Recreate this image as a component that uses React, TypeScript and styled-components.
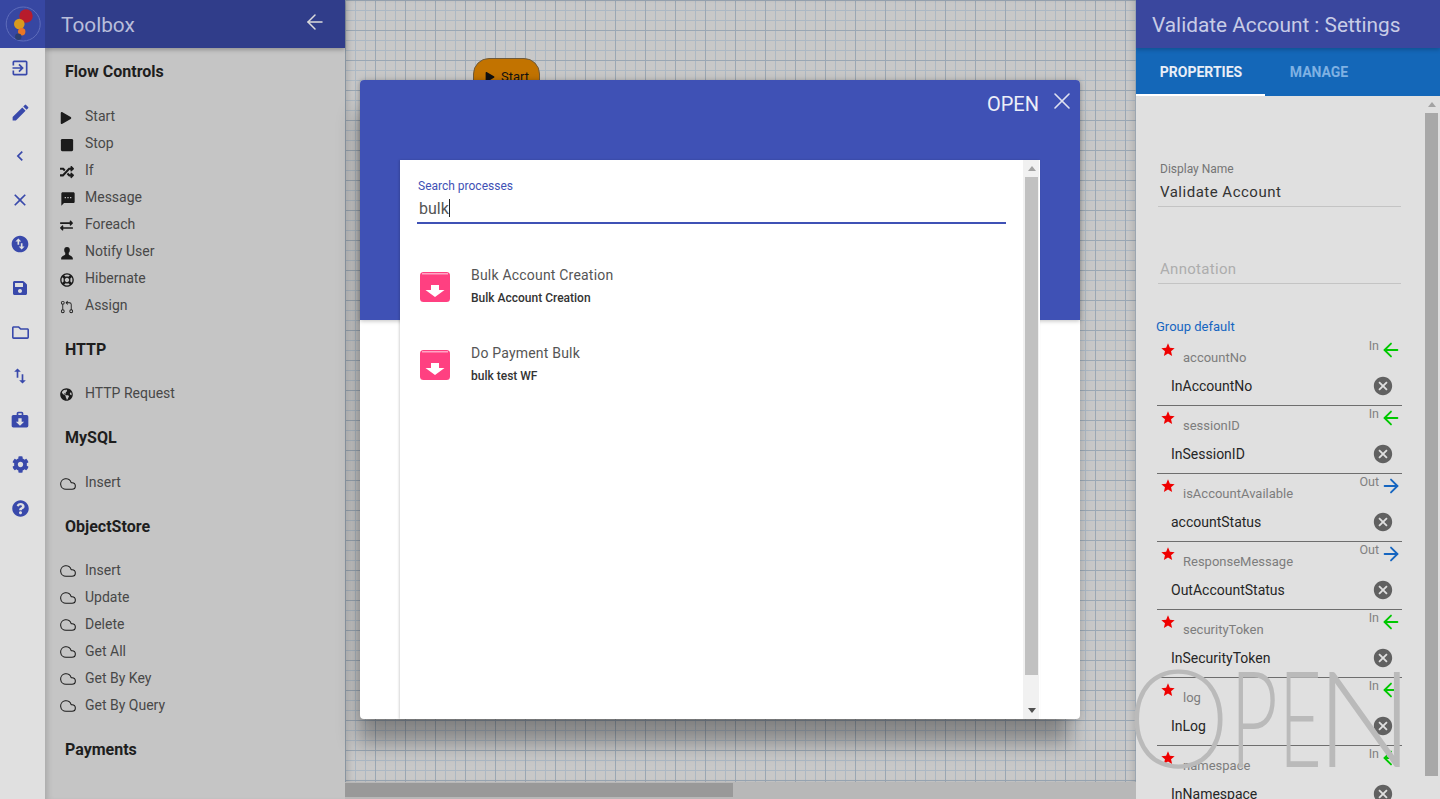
import React from "react";
import styled, { createGlobalStyle } from "styled-components";
import { FiArrowLeft, FiArrowRight, FiCloud, FiX } from "react-icons/fi";
import {
  MdExitToApp, MdEdit, MdChevronLeft, MdClose, MdSwapVerticalCircle, MdSwapVert, MdCancel, MdStar, MdTextsms,
} from "react-icons/md";
import { FaSave, FaRegFolder, FaCog, FaQuestionCircle, FaPlay, FaStop, FaRandom, FaRegLifeRing, FaGlobeAmericas, FaExchangeAlt } from "react-icons/fa";
import { GoGitPullRequest } from "react-icons/go";

const Global = createGlobalStyle`
  html, body { margin: 0; height: 100%; overflow: hidden; }
  body { font-family: Roboto, "Liberation Sans", sans-serif; background: #c8c8c8; }
  #root { height: 100%; }
  * { box-sizing: border-box; }
`;

const Page = styled.div`
  display: flex;
  height: 799px;
  width: 1440px;
  overflow: hidden;
  position: relative;
`;

/* ---------- Icon rail ---------- */
const Rail = styled.nav`
  width: 45px;
  flex: none;
  background: #e0e0e0;
  display: flex;
  flex-direction: column;
  z-index: 2;
`;
const LogoBox = styled.div`
  height: 48px;
  margin-bottom: -2px;
  background: #3747a2;
  display: flex;
  align-items: center;
  justify-content: center;
`;
const RailButton = styled.div`
  height: 44px;
  display: flex;
  align-items: center;
  justify-content: center;
  color: #3949ab;
  padding-right: 5px;
`;

/* ---------- Toolbox ---------- */
const Toolbox = styled.aside`
  width: 300px;
  flex: none;
  background: #c5c5c5;
  display: flex;
  flex-direction: column;
  box-shadow: inset 6px 0 6px -4px rgba(0, 0, 0, 0.16);
  z-index: 1;
`;
const ToolboxHeader = styled.header`
  height: 48px;
  flex: none;
  background: #303d8a;
  color: #b9bedb;
  display: flex;
  align-items: center;
  justify-content: space-between;
  padding: 2px 18px 0 16px;
  font-size: 20.8px;
  box-shadow: 0 2px 4px rgba(0, 0, 0, 0.25);
`;
const BackArrow = styled.span`
  display: flex;
  color: #dcdcdc;
  margin-top: -6px;
`;
const ToolboxBody = styled.div`
  padding: 11.5px 0 0 15px;
  overflow: hidden;
  flex: 1;
`;
const Section = styled.section<{ $after: number }>`
  margin-bottom: ${(p) => p.$after}px;
`;
const Heading = styled.h3<{ $below: number }>`
  margin: 0 0 ${(p) => p.$below}px 5px;
  height: 24px;
  line-height: 24px;
  font-size: 16px;
  font-weight: 700;
  color: #1e1e1e;
`;
const Tool = styled.div`
  height: 27px;
  display: flex;
  align-items: center;
  font-size: 14px;
  color: #484848;
`;
const ToolIcon = styled.span`
  width: 25px;
  flex: none;
  display: flex;
  align-items: center;
  color: #1b1b1b;
  margin-top: 3px;
`;

/* ---------- Canvas ---------- */
const Canvas = styled.main`
  flex: 1;
  display: flex;
  flex-direction: column;
  min-width: 0;
  position: relative;
`;
const Grid = styled.div`
  flex: 1;
  background-color: #c8c8c8;
  background-image:
    linear-gradient(to right, #9aa7b4 1px, transparent 1px),
    linear-gradient(to bottom, #9aa7b4 1px, transparent 1px),
    linear-gradient(to right, #acb8c4 1px, transparent 1px),
    linear-gradient(to bottom, #acb8c4 1px, transparent 1px);
  background-size: 30px 30px, 30px 30px, 10px 10px, 10px 10px;
  padding: 58px 0 0 128px;
  box-shadow: inset 6px 0 6px -3px rgba(0, 0, 0, 0.14), inset -6px 0 6px -3px rgba(0, 0, 0, 0.12);
`;
const StartNode = styled.div`
  width: 67px;
  height: 44px;
  border-radius: 16px;
  background: #c27300;
  border: 1px solid #6f5a3a;
  display: flex;
  align-items: flex-start;
  gap: 6px;
  padding: 10px 0 0 11px;
  font-size: 13px;
  color: #111;
`;
const HScroll = styled.div`
  height: 17px;
  flex: none;
  background: #b8b8b8;
  padding-top: 1px;
`;
const HThumb = styled.div`
  width: 388px;
  height: 14px;
  background: #999;
`;

/* ---------- Modal ---------- */
const Overlay = styled.div`
  position: absolute;
  inset: 0;
  display: flex;
  justify-content: center;
  padding-top: 80px;
  z-index: 3;
  pointer-events: none;
`;
const Modal = styled.div`
  position: relative;
  width: 720px;
  height: 639px;
  background: #fff;
  border-radius: 4px;
  box-shadow: -6px 28px 20px -4px rgba(0, 0, 0, 0.33), 0 0 8px rgba(0, 0, 0, 0.12);
`;
const ModalBand = styled.div`
  height: 240px;
  background: #3f51b5;
  border-radius: 4px 4px 0 0;
  box-shadow: 0 1px 4px rgba(0, 0, 0, 0.25);
  display: flex;
  justify-content: flex-end;
  align-items: flex-start;
  color: #eceef8;
`;
const ModalTitle = styled.div`
  font-size: 20px;
  margin: 12px 0 0 0;
  line-height: 24px;
`;
const ModalClose = styled.span`
  display: flex;
  color: #dfe1f0;
  margin: 7px 4px 0 9px;
`;
const Sheet = styled.div`
  position: absolute;
  left: 40px;
  right: 40px;
  top: 80px;
  bottom: 0;
  background: #fff;
  box-shadow: -1px 0 2px rgba(0, 0, 0, 0.16);
  display: flex;
`;
const SheetContent = styled.div`
  flex: 1;
  padding: 19px 17px 0 17px;
  min-width: 0;
`;
const SearchLabel = styled.label`
  display: block;
  font-size: 12px;
  line-height: 14px;
  color: #3f51b5;
  padding-left: 1px;
`;
const SearchValue = styled.div`
  height: 31px;
  padding: 6px 0 0 2px;
  font-size: 16px;
  line-height: 20px;
  color: #555;
  border-bottom: 2px solid #3f51b5;
  display: flex;
  align-items: flex-start;
`;
const Caret = styled.span`
  display: inline-block;
  width: 1px;
  height: 18px;
  background: #222;
`;
const ResultList = styled.div`
  margin-top: 39px;
  padding-left: 3px;
`;
const Result = styled.div`
  height: 78px;
  display: flex;
  gap: 21px;
`;
const ResultIcon = styled.span`
  width: 30px;
  height: 30px;
  margin-top: 9px;
  flex: none;
  display: flex;
`;
const ResultText = styled.div`
  display: flex;
  flex-direction: column;
`;
const ResultTitle = styled.div`
  font-size: 14px;
  line-height: 24px;
  color: #555;
  letter-spacing: 0.2px;
`;
const ResultSub = styled.div`
  font-size: 12px;
  line-height: 22px;
  font-weight: 500;
  color: #333;
`;
const VScroll = styled.div<{ $track: string }>`
  width: 16px;
  flex: none;
  margin-right: 1px;
  background: ${(p) => p.$track};
  display: flex;
  flex-direction: column;
  align-items: center;
  padding: 0 1px 0 2px;
`;
const ArrowCap = styled.div<{ $down?: boolean }>`
  height: 17px;
  flex: none;
  width: 100%;
  display: flex;
  align-items: center;
  justify-content: center;
  &::before {
    content: "";
    border-left: 4px solid transparent;
    border-right: 4px solid transparent;
    ${(p) => (p.$down ? "border-top: 5px solid #505050;" : "border-bottom: 5px solid #a3a3a3;")}
  }
`;
const VThumb = styled.div<{ $h: number; $color: string }>`
  width: 100%;
  height: ${(p) => p.$h}px;
  background: ${(p) => p.$color};
`;
const VSpacer = styled.div`
  flex: 1;
`;

/* ---------- Right panel ---------- */
const Settings = styled.aside`
  width: 304px;
  flex: none;
  background: #e0e0e0;
  display: flex;
  flex-direction: column;
  height: 799px;
  overflow: hidden;
`;
const SettingsHeader = styled.header`
  height: 48px;
  flex: none;
  background: #3a479e;
  color: #c8cce6;
  font-size: 20.8px;
  line-height: 50px;
  padding-left: 16px;
  box-shadow: 0 2px 4px rgba(0, 0, 0, 0.2);
  z-index: 1;
`;
const Tabs = styled.div`
  height: 48px;
  flex: none;
  background: #1467b8;
  display: flex;
`;
const TabItem = styled.div<{ $active?: boolean }>`
  width: ${(p) => (p.$active ? 129 : 108)}px;
  padding-left: ${(p) => (p.$active ? 1 : 0)}px;
  text-align: center;
  font-size: 14px;
  font-weight: 700;
  line-height: 48px;
  color: ${(p) => (p.$active ? "#e8eef7" : "#7fb1e3")};
  border-bottom: 2px solid ${(p) => (p.$active ? "#fff" : "transparent")};
`;
const SettingsBody = styled.div`
  flex: 1;
  display: flex;
  min-height: 0;
  overflow: hidden;
`;
const Form = styled.div`
  width: 287px;
  flex: none;
  padding: 0 0 0 20px;
`;
const SmallLabel = styled.div`
  margin-top: 66px;
  padding-left: 4px;
  font-size: 12px;
  line-height: 14px;
  color: #757575;
`;
const Field = styled.div<{ $muted?: boolean; $gap: number }>`
  margin-top: ${(p) => p.$gap}px;
  width: 243px;
  margin-left: 2px;
  padding: 1px 0 2px 2px;
  font-size: 15px;
  line-height: 24px;
  letter-spacing: ${(p) => (p.$muted ? 0.3 : 0.5)}px;
  color: ${(p) => (p.$muted ? "#adadad" : "#333")};
  border-bottom: 1px solid #c4c4c4;
`;
const GroupTitle = styled.div`
  margin-top: 35px;
  font-size: 13px;
  line-height: 16px;
  color: #1565c0;
  margin-bottom: 3px;
`;
const ParamRow = styled.div`
  height: 68px;
  width: 245px;
  margin-left: 1px;
  border-bottom: 1px solid #6e6e6e;
`;
const ParamHead = styled.div`
  height: 32px;
  display: flex;
  align-items: flex-start;
  padding-left: 4px;
`;
const Star = styled.span`
  display: flex;
  color: #ef0000;
  margin: 4px 7px 0 -1px;
`;
const ParamName = styled.span`
  margin-top: 12px;
  font-size: 13px;
  line-height: 16px;
  color: #7d7d7d;
`;
const Direction = styled.span`
  margin-left: auto;
  display: flex;
  align-items: flex-start;
  font-size: 12.5px;
  line-height: 16px;
  color: #808080;
  gap: 1px;
`;
const DirArrow = styled.span<{ $color: string }>`
  display: flex;
  color: ${(p) => p.$color};
  margin-top: 1px;
`;
const ParamValue = styled.div`
  display: flex;
  align-items: center;
  justify-content: space-between;
  height: 32px;
  padding: 0 8px 0 14px;
  font-size: 14px;
  color: #262626;
`;
const Clear = styled.span`
  display: flex;
  color: #616161;
`;

/* ---------- Watermark ---------- */
const Watermark = styled.div`
  position: absolute;
  left: 0;
  top: 0;
  z-index: 4;
  pointer-events: none;
`;
const MarkLetter = styled.span<{ $x: number; $sx: number; $w: number; $stroke?: number }>`
  position: absolute;
  top: 641px;
  left: ${(p) => p.$x}px;
  font-family: Lato, Roboto, sans-serif;
  font-weight: ${(p) => p.$w};
  font-size: 134px;
  line-height: 150px;
  color: #bababa;
  -webkit-text-stroke: ${(p) => p.$stroke ?? 0}px #bababa;
  transform-origin: left center;
  transform: scaleX(${(p) => p.$sx});
`;

const Logo = () => (
  <svg width="36" height="36" viewBox="0 0 36 36" style={{ marginLeft: 1 }}>
    <circle cx="18.2" cy="18" r="17" fill="none" stroke="#5f6dbb" strokeWidth="1" />
    <circle cx="21" cy="10" r="6.7" fill="#b71c2c" />
    <circle cx="14.3" cy="18" r="5.3" fill="#d99a1f" />
    <circle cx="16.7" cy="25.7" r="3.7" fill="#ec7623" />
    <circle cx="13.3" cy="30.7" r="3.2" fill="#2d3f70" />
  </svg>
);

const BriefcaseDownload = () => (
  <svg width="20" height="20" viewBox="0 0 24 24" fill="currentColor">
    <path d="M10,2H14A2,2 0 0,1 16,4V6H20A2,2 0 0,1 22,8V19A2,2 0 0,1 20,21H4C2.89,21 2,20.1 2,19V8C2,6.89 2.89,6 4,6H8V4C8,2.89 8.89,2 10,2M14,6V4H10V6H14M12,19L17,14H14V10H10V14H7L12,19Z" />
  </svg>
);

const ArchiveIcon = () => (
  <svg width="30" height="30" viewBox="0 0 30 30">
    <rect x="0" y="0" width="30" height="30" rx="3.5" fill="#ff4081" />
    <rect x="2" y="1.2" width="26" height="1.2" fill="#ffc0d6" />
    <path d="M11 13h8v5h5.5l-9.500 7-9.500-7H11z" fill="#fff" />
  </svg>
);

const PersonIcon = () => (
  <svg width="14" height="14" viewBox="0 0 24 24" fill="currentColor">
    <ellipse cx="12" cy="7" rx="4.800" ry="5.500" />
    <path d="M9 11h6v3c0 2 7 3 7 7v2H2v-2c0-4 7-5 7-7z" />
  </svg>
);

const railIcons = [
  <MdExitToApp size={20} />,
  <MdEdit size={21} />,
  <MdChevronLeft size={20} />,
  <MdClose size={20} />,
  <MdSwapVerticalCircle size={20} />,
  <FaSave size={16} />,
  <FaRegFolder size={17} />,
  <MdSwapVert size={20} />,
  <BriefcaseDownload />,
  <FaCog size={17} />,
  <FaQuestionCircle size={17} />,
];

const cloud = <FiCloud size={16} strokeWidth={1.6} />;
const sections = [
  {
    title: "Flow Controls",
    below: 19,
    after: 19.5,
    items: [
      ["Start", <FaPlay size={12} />],
      ["Stop", <FaStop size={14} />],
      ["If", <FaRandom size={14} />],
      ["Message", <MdTextsms size={16} />],
      ["Foreach", <FaExchangeAlt size={13} />],
      ["Notify User", <PersonIcon />],
      ["Hibernate", <FaRegLifeRing size={14} />],
      ["Assign", <GoGitPullRequest size={14} />],
    ],
  },
  { title: "HTTP", below: 17, after: 19.5, items: [["HTTP Request", <FaGlobeAmericas size={13} />]] },
  { title: "MySQL", below: 19, after: 19, items: [["Insert", cloud]] },
  {
    title: "ObjectStore",
    below: 17.5,
    after: 19.5,
    items: [
      ["Insert", cloud],
      ["Update", cloud],
      ["Delete", cloud],
      ["Get All", cloud],
      ["Get By Key", cloud],
      ["Get By Query", cloud],
    ],
  },
  { title: "Payments", below: 0, after: 0, items: [] },
] as { title: string; below: number; after: number; items: [string, React.ReactNode][] }[];

const params = [
  ["accountNo", "In", "InAccountNo"],
  ["sessionID", "In", "InSessionID"],
  ["isAccountAvailable", "Out", "accountStatus"],
  ["ResponseMessage", "Out", "OutAccountStatus"],
  ["securityToken", "In", "InSecurityToken"],
  ["log", "In", "InLog"],
  ["namespace", "In", "InNamespace"],
];

export default function App() {
  return (
    <Page>
      <Global />
      <Rail>
        <LogoBox><Logo /></LogoBox>
        {railIcons.map((icon, i) => (
          <RailButton key={i}>{icon}</RailButton>
        ))}
      </Rail>

      <Toolbox>
        <ToolboxHeader>
          Toolbox
          <BackArrow><FiArrowLeft size={24} strokeWidth={1.5} /></BackArrow>
        </ToolboxHeader>
        <ToolboxBody>
          {sections.map((s) => (
            <Section key={s.title} $after={s.after}>
              <Heading $below={s.below}>{s.title}</Heading>
              {s.items.map(([label, icon], i) => (
                <Tool key={i}>
                  <ToolIcon>{icon}</ToolIcon>
                  {label}
                </Tool>
              ))}
            </Section>
          ))}
        </ToolboxBody>
      </Toolbox>

      <Canvas>
        <Grid>
          <StartNode>
            <FaPlay size={10} style={{ marginTop: 3 }} />
            Start
          </StartNode>
        </Grid>
        <HScroll><HThumb /></HScroll>
      </Canvas>

      <Settings>
        <SettingsHeader>Validate Account : Settings</SettingsHeader>
        <Tabs>
          <TabItem $active>PROPERTIES</TabItem>
          <TabItem>MANAGE</TabItem>
        </Tabs>
        <SettingsBody>
          <Form>
            <SmallLabel>Display Name</SmallLabel>
            <Field $gap={3}>Validate Account</Field>
            <Field $gap={49} $muted>Annotation</Field>
            <GroupTitle>Group default</GroupTitle>
            {params.map(([name, dir, value]) => (
              <ParamRow key={name}>
                <ParamHead>
                  <Star><MdStar size={16} /></Star>
                  <ParamName>{name}</ParamName>
                  <Direction>
                    {dir}
                    <DirArrow $color={dir === "In" ? "#00c800" : "#1565c0"}>
                      {dir === "In" ? <FiArrowLeft size={22} /> : <FiArrowRight size={22} />}
                    </DirArrow>
                  </Direction>
                </ParamHead>
                <ParamValue>
                  {value}
                  <Clear><MdCancel size={22} /></Clear>
                </ParamValue>
              </ParamRow>
            ))}
          </Form>
          <VScroll $track="#e0e0e0">
            <ArrowCap />
            <VThumb $h={663} $color="#a8a8a8" />
            <VSpacer />
          </VScroll>
        </SettingsBody>
      </Settings>

      <Overlay>
        <Modal>
          <ModalBand>
            <ModalTitle>OPEN</ModalTitle>
            <ModalClose><FiX size={28} strokeWidth={1.4} /></ModalClose>
          </ModalBand>
          <Sheet>
            <SheetContent>
              <SearchLabel>Search processes</SearchLabel>
              <SearchValue>bulk<Caret /></SearchValue>
              <ResultList>
                <Result>
                  <ResultIcon><ArchiveIcon /></ResultIcon>
                  <ResultText>
                    <ResultTitle>Bulk Account Creation</ResultTitle>
                    <ResultSub>Bulk Account Creation</ResultSub>
                  </ResultText>
                </Result>
                <Result>
                  <ResultIcon><ArchiveIcon /></ResultIcon>
                  <ResultText>
                    <ResultTitle>Do Payment Bulk</ResultTitle>
                    <ResultSub>bulk test WF</ResultSub>
                  </ResultText>
                </Result>
              </ResultList>
            </SheetContent>
            <VScroll $track="#f1f1f1">
              <ArrowCap />
              <VThumb $h={498} $color="#c1c1c1" />
              <VSpacer />
              <ArrowCap $down />
            </VScroll>
          </Sheet>
        </Modal>
      </Overlay>

      <Watermark>
        <MarkLetter $x={1127} $sx={0.98} $w={200} $stroke={3}>O</MarkLetter>
        <MarkLetter $x={1230} $sx={0.62} $w={300}>P</MarkLetter>
        <MarkLetter $x={1279} $sx={0.55} $w={300}>E</MarkLetter>
        <MarkLetter $x={1316} $sx={0.96} $w={300}>N</MarkLetter>
      </Watermark>
    </Page>
  );
}
